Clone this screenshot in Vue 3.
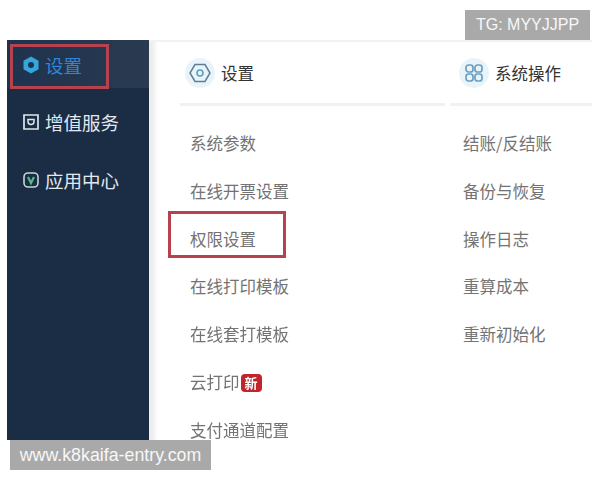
<script setup>
const nav = [
  { label: '设置', icon: 'gear', active: true },
  { label: '增值服务', icon: 'box' },
  { label: '应用中心', icon: 'app' }
]
const columns = [
  {
    title: '设置',
    icon: 'hex',
    items: ['系统参数', '在线开票设置', '权限设置', '在线打印模板', '在线套打模板', '云打印', '支付通道配置']
  },
  {
    title: '系统操作',
    icon: 'grid',
    items: ['结账/反结账', '备份与恢复', '操作日志', '重算成本', '重新初始化']
  }
]
</script>

<template>
  <div class="page">
    <div class="shot">
      <aside class="side">
        <div v-for="n in nav" :key="n.label" class="nav" :class="{ active: n.active }">
          <svg class="nav-icon" viewBox="0 0 20 20">
            <template v-if="n.icon === 'gear'">
              <path d="M10 1.500l7.500 4.200v8.600L10 18.500l-7.500-4.200V5.700z" fill="#35a7dc" />
              <circle cx="10" cy="10" r="3" fill="#1d3350" />
            </template>
            <template v-else-if="n.icon === 'box'">
              <path d="M3 3h14v14H3z" fill="none" stroke="#dfe6ec" stroke-width="1.700" />
              <path d="M7 7.500v2a3 3 0 0 0 6 0v-2z" fill="none" stroke="#dfe6ec" stroke-width="1.500" />
            </template>
            <template v-else>
              <rect x="3" y="3" width="14" height="14" rx="4" fill="none" stroke="#c3d8d6" stroke-width="1.600" />
              <path d="M7 7l3 6 3-6" fill="none" stroke="#57b88a" stroke-width="2.200" />
            </template>
          </svg>
          <span>{{ n.label }}</span>
          <i v-if="n.active" class="mark mark-nav"></i>
        </div>
      </aside>
      <main class="panel">
        <section v-for="c in columns" :key="c.title" class="col">
          <header class="head">
            <span class="head-icon">
              <svg viewBox="0 0 24 24">
                <template v-if="c.icon === 'hex'">
                  <path d="M7 3.500h10l5 8.500-5 8.500H7L2 12z" fill="none" stroke="#5f7f96" stroke-width="1.500" />
                  <circle cx="12" cy="12" r="3" fill="none" stroke="#5f9fc0" stroke-width="1.600" />
                </template>
                <template v-else>
                  <rect x="4" y="4" width="7" height="7" rx="2.500" fill="none" stroke="#6a9fc0" stroke-width="1.700" />
                  <rect x="13" y="4" width="7" height="7" rx="2.500" fill="none" stroke="#6a9fc0" stroke-width="1.700" />
                  <rect x="4" y="13" width="7" height="7" rx="2.500" fill="none" stroke="#6a9fc0" stroke-width="1.700" />
                  <rect x="13" y="13" width="7" height="7" rx="2.500" fill="none" stroke="#6a9fc0" stroke-width="1.700" />
                </template>
              </svg>
            </span>
            <span class="head-text">{{ c.title }}</span>
          </header>
          <ul class="list">
            <li v-for="it in c.items" :key="it" class="item">
              <span>{{ it }}</span><b v-if="it === '云打印'" class="new">新</b>
              <i v-if="it === '权限设置'" class="mark mark-item"></i>
            </li>
          </ul>
        </section>
      </main>
    </div>
    <div class="wm wm-top">TG: MYYJJPP</div>
    <div class="wm wm-bottom">www.k8kaifa-entry.com</div>
  </div>
</template>

<style>
html, body { margin: 0; background: #fff; }
</style>

<style scoped>
.page {
  position: relative;
  width: 600px;
  height: 480px;
  overflow: hidden;
  background: #fff;
  padding: 40px 8px 40px 7px;
  box-sizing: border-box;
  font-family: "Noto Sans CJK SC", "Liberation Sans", sans-serif;
}
.shot {
  display: flex;
  height: 400px;
  filter: blur(0.7px);
}
.side {
  width: 142px;
  flex: none;
  background: #1b2c45;
  display: flex;
  flex-direction: column;
  box-sizing: border-box;
}
.nav {
  position: relative;
  height: 58px;
  display: flex;
  align-items: center;
  gap: 4px;
  padding: 0 0 0 14px;
  box-sizing: border-box;
  font-size: 18.500px;
  color: #e3e8ee;
}
.nav.active {
  height: 48px;
  padding-top: 2px;
  margin-bottom: 5px;
  color: #2f86d6;
  background: linear-gradient(90deg, #1e3350, #2a3a50);
}
.nav-icon { width: 20px; height: 20px; flex: none; }
.mark {
  position: absolute;
  border: 3px solid #b5424c;
  box-sizing: border-box;
  pointer-events: none;
}
.mark-nav { left: 3px; top: 4px; width: 99px; height: 45px; }
.panel {
  flex: 1;
  display: flex;
  gap: 5px;
  padding-left: 31px;
  border-top: 2px solid #f1f2f3;
  box-shadow: inset 11px 0 4px -5px #ededed;
  background: #fff;
}
.col:first-child { width: 265px; }
.col:last-child { flex: 1; }
.head {
  height: 64px;
  display: flex;
  align-items: center;
  gap: 6px;
  padding: 1px 0 0 5px;
  box-sizing: border-box;
  border-bottom: 3px solid #f0f1f2;
}
.col:last-child .head { padding-left: 9px; }
.head-icon {
  width: 30px;
  height: 30px;
  border-radius: 50%;
  background: #e9f3fa;
  display: flex;
  align-items: center;
  justify-content: center;
  flex: none;
}
.head-icon svg { width: 24px; height: 24px; }
.head-text { font-size: 16.500px; color: #333; }
.list {
  list-style: none;
  margin: 0;
  padding: 28px 0 0 10px;
  display: flex;
  flex-direction: column;
  gap: 28.800px;
}
.col:last-child .list { padding-left: 13px; }
.item {
  position: relative;
  height: 19px;
  line-height: 19px;
  font-size: 16.500px;
  color: #737373;
  white-space: nowrap;
}
.new {
  display: inline-block;
  width: 21px;
  height: 18px;
  line-height: 18px;
  margin-left: 1px;
  border-radius: 4px;
  background: #c3242c;
  color: #fff;
  font-size: 13px;
  font-weight: 700;
  text-align: center;
  vertical-align: 1px;
}
.mark-item { left: -22px; top: -19px; width: 118px; height: 47px; }
.wm {
  position: absolute;
  background: #a9a9a9;
  color: #f7f7f7;
  font-family: "Liberation Sans", sans-serif;
  height: 30px;
  line-height: 30px;
  text-align: center;
  white-space: nowrap;
}
.wm-top { left: 465px; top: 10px; width: 125px; font-size: 16px; }
.wm-bottom { left: 10px; top: 440px; width: 201px; font-size: 17.800px; }
</style>
